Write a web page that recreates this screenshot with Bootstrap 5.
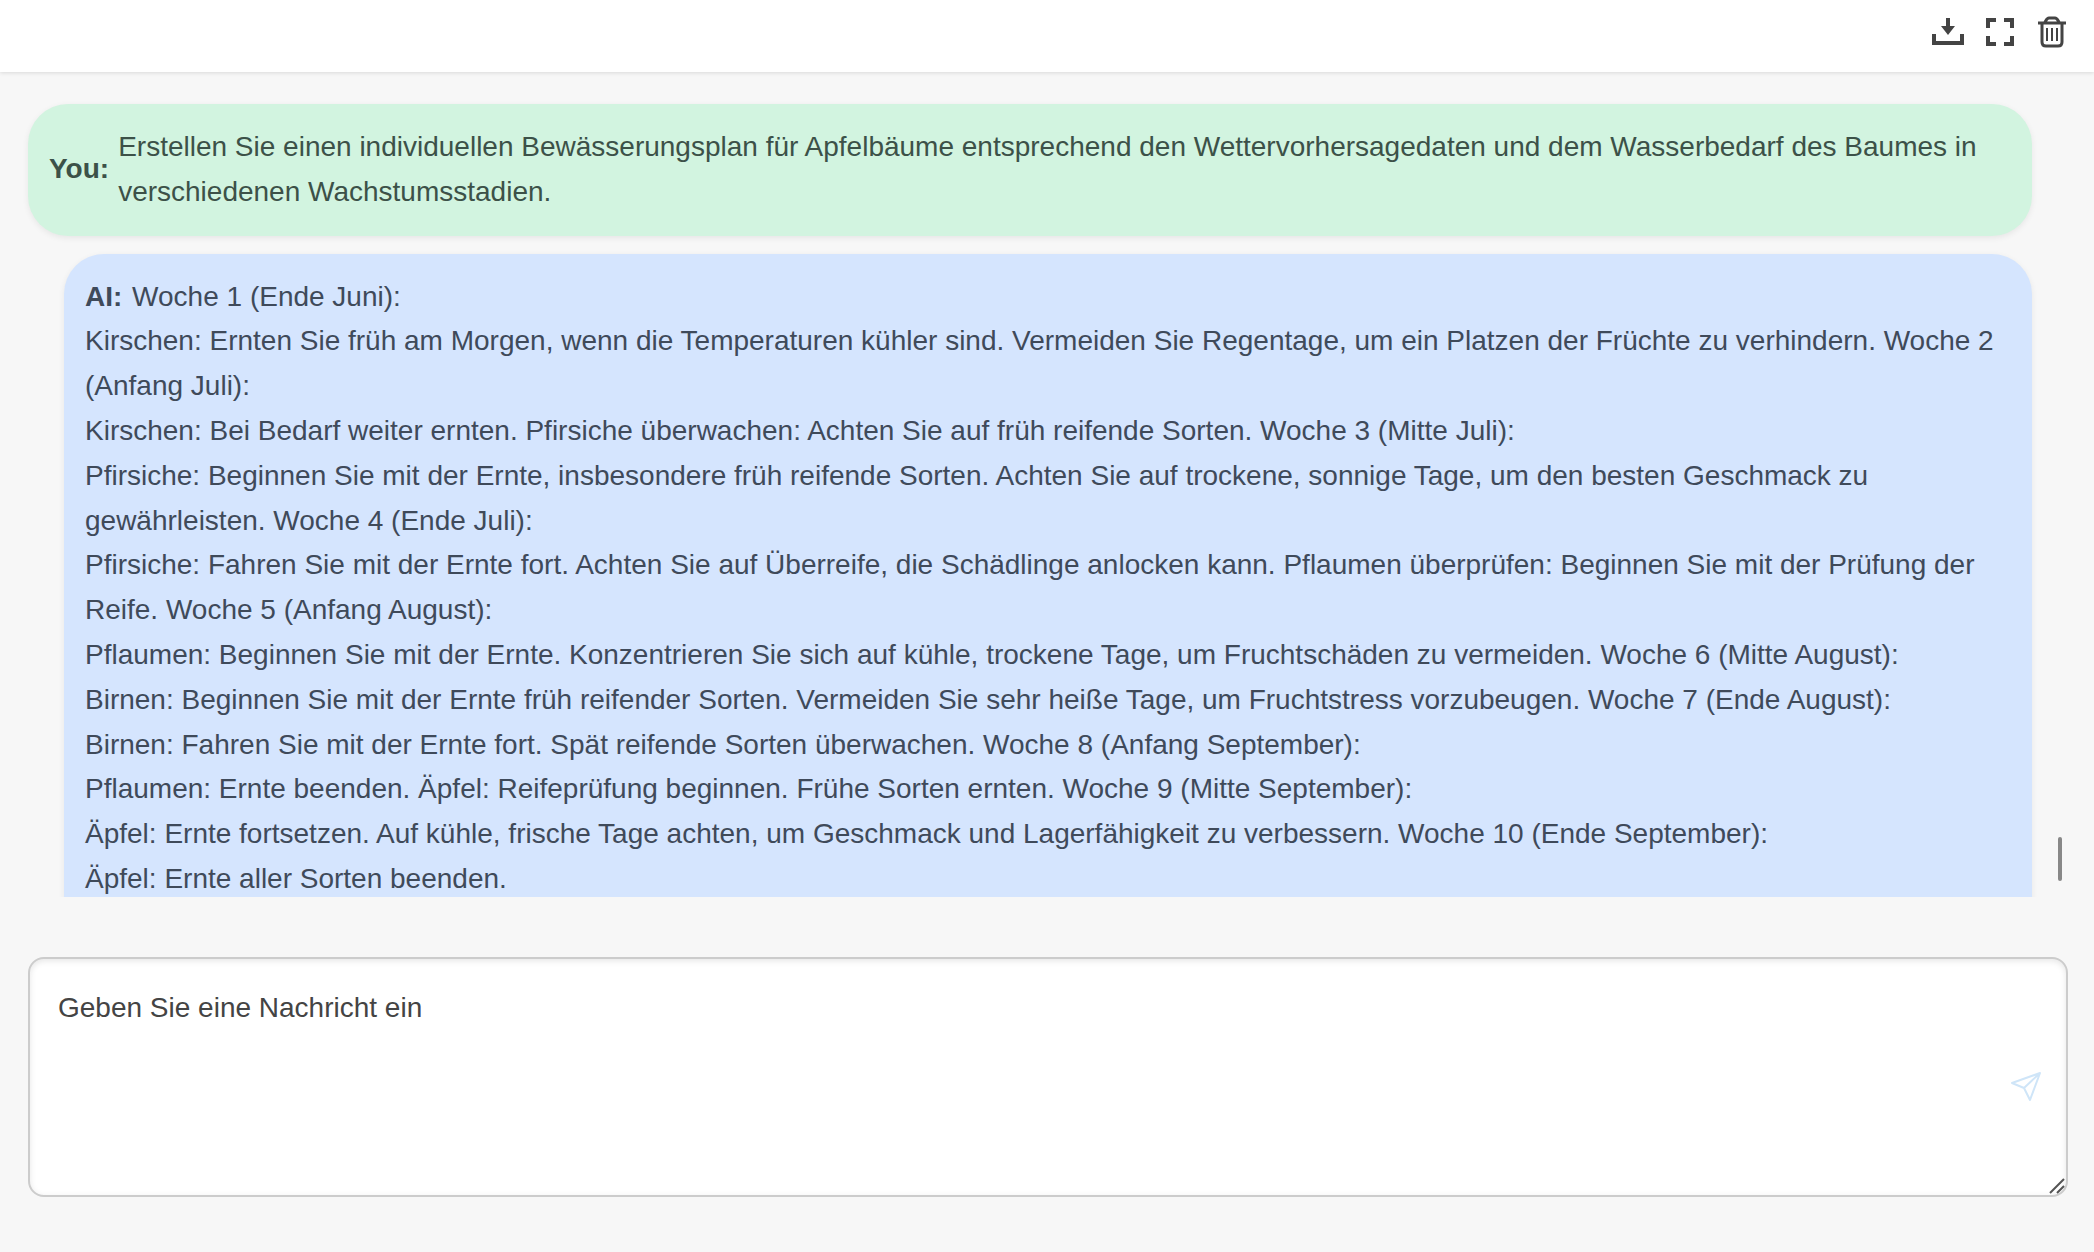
<!DOCTYPE html>
<html lang="de">
<head>
<meta charset="utf-8">
<meta name="viewport" content="width=device-width, initial-scale=1">
<title>Chat</title>
<link rel="stylesheet" href="https://cdn.jsdelivr.net/npm/bootstrap@5.3.0/dist/css/bootstrap.min.css">
<style>
body { background: #f7f7f7; color: #444; font-family: "Liberation Sans", Arial, sans-serif; font-size: 28px; line-height: 1.6; }
.chat-header { height: 72px; padding: 0 24px; gap: 16px; background: #fff; box-shadow: 0 1px 4px rgba(0,0,0,.12); z-index: 1; }
.tool-btn { width: 36px; height: 36px; color: #444; line-height: 1; margin-bottom: 8px; }
.message-list { min-height: 0; padding: 32px 62px 0 28px; }
.bubble { padding: 21px; border-radius: 40px; box-shadow: 0 2px 6px rgba(0,0,0,.07); }
.bubble-user { background: #d2f4e0; gap: 9px; color: #3c5148; margin-bottom: 18px; }
.bubble-ai { background: #d5e5fe; color: #3f4a5a; margin-left: 36px; padding-bottom: 60px; }
.bubble-ai strong { margin-right: 2px; }
.scroll-thumb { right: 32px; bottom: 16px; width: 4px; height: 44px; border-radius: 2px; background: #888; }
.composer { padding: 60px 26px 55px 28px; }
.message-input { height: 240px; padding: 27px 80px 27px 28px; font-size: 28px; line-height: 1.6; color: #444; border: 2px solid #ccc; border-radius: 16px; box-shadow: inset 0 2px 6px rgba(0,0,0,.1); resize: none; }
.message-input::placeholder { color: #444; opacity: 1; }
.send-btn { right: 24px; top: 112px; width: 36px; height: 36px; }
.resize-grip { right: 2px; bottom: 2px; pointer-events: none; }
</style>
<script src="https://cdn.jsdelivr.net/npm/bootstrap@5.3.0/dist/js/bootstrap.bundle.min.js"></script>
</head>
<body>
<div class="d-flex flex-column vh-100">
  <header class="chat-header d-flex align-items-center justify-content-end flex-shrink-0 position-relative">
    <button type="button" class="btn tool-btn p-0 border-0 d-flex" aria-label="Herunterladen">
      <svg width="36" height="36" viewBox="0 0 36 36" fill="none" stroke="currentColor" stroke-width="4"><path d="M4 20v9h28v-9"/><path d="M16 4h4v8h5l-7 9-7-9h5z" fill="currentColor" stroke="none"/></svg>
    </button>
    <button type="button" class="btn tool-btn p-0 border-0 d-flex" aria-label="Vollbild">
      <svg width="36" height="36" viewBox="0 0 36 36" fill="none" stroke="currentColor" stroke-width="4"><path d="M6 14V6h8M22 6h8v8M30 22v8h-8M14 30H6v-8"/></svg>
    </button>
    <button type="button" class="btn tool-btn p-0 border-0 d-flex" aria-label="Löschen">
      <svg width="36" height="36" viewBox="0 0 36 36" fill="none" stroke="currentColor" stroke-width="3"><path d="M4 9h28M10 9c2-1 2-5 5-5h6c3 0 3 4 5 5M8 9v19q0 4 4 4h12q4 0 4-4V9"/><path d="M13 14v13M18 14v13M23 14v13" stroke-width="2"/></svg>
    </button>
  </header>

  <main class="message-list flex-grow-1 overflow-hidden position-relative">
    <article class="bubble bubble-user d-flex align-items-center">
      <strong>You:</strong>
      <div>Erstellen Sie einen individuellen Bewässerungsplan für Apfelbäume entsprechend den Wettervorhersagedaten und dem Wasserbedarf des Baumes in verschiedenen Wachstumsstadien.</div>
    </article>
    <article class="bubble bubble-ai">
      <strong>AI:</strong> Woche 1 (Ende Juni):<br>
      Kirschen: Ernten Sie früh am Morgen, wenn die Temperaturen kühler sind. Vermeiden Sie Regentage, um ein Platzen der Früchte zu verhindern. Woche 2 (Anfang Juli):<br>
      Kirschen: Bei Bedarf weiter ernten. Pfirsiche überwachen: Achten Sie auf früh reifende Sorten. Woche 3 (Mitte Juli):<br>
      Pfirsiche: Beginnen Sie mit der Ernte, insbesondere früh reifende Sorten. Achten Sie auf trockene, sonnige Tage, um den besten Geschmack zu gewährleisten. Woche 4 (Ende Juli):<br>
      Pfirsiche: Fahren Sie mit der Ernte fort. Achten Sie auf Überreife, die Schädlinge anlocken kann. Pflaumen überprüfen: Beginnen Sie mit der Prüfung der Reife. Woche 5 (Anfang August):<br>
      Pflaumen: Beginnen Sie mit der Ernte. Konzentrieren Sie sich auf kühle, trockene Tage, um Fruchtschäden zu vermeiden. Woche 6 (Mitte August):<br>
      Birnen: Beginnen Sie mit der Ernte früh reifender Sorten. Vermeiden Sie sehr heiße Tage, um Fruchtstress vorzubeugen. Woche 7 (Ende August):<br>
      Birnen: Fahren Sie mit der Ernte fort. Spät reifende Sorten überwachen. Woche 8 (Anfang September):<br>
      Pflaumen: Ernte beenden. Äpfel: Reifeprüfung beginnen. Frühe Sorten ernten. Woche 9 (Mitte September):<br>
      Äpfel: Ernte fortsetzen. Auf kühle, frische Tage achten, um Geschmack und Lagerfähigkeit zu verbessern. Woche 10 (Ende September):<br>
      Äpfel: Ernte aller Sorten beenden.
    </article>
    <div class="scroll-thumb position-absolute"></div>
  </main>

  <form class="composer flex-shrink-0">
    <div class="position-relative">
      <textarea class="form-control message-input" aria-label="Nachricht" placeholder="Geben Sie eine Nachricht ein"></textarea>
      <button type="button" class="btn send-btn position-absolute p-0 border-0 d-flex" aria-label="Senden">
        <svg width="36" height="36" viewBox="0 0 36 36" fill="none" stroke="#cfe5f8" stroke-width="2" stroke-linejoin="round"><path d="M4 14L32 4 22 31 16 19zM16 19L32 4"/></svg>
      </button>
      <svg class="resize-grip position-absolute" width="18" height="18" viewBox="0 0 18 18" fill="none" stroke="#555" stroke-width="2"><path d="M2 16L16 2M9 16l7-7"/></svg>
    </div>
  </form>
</div>
</body>
</html>
